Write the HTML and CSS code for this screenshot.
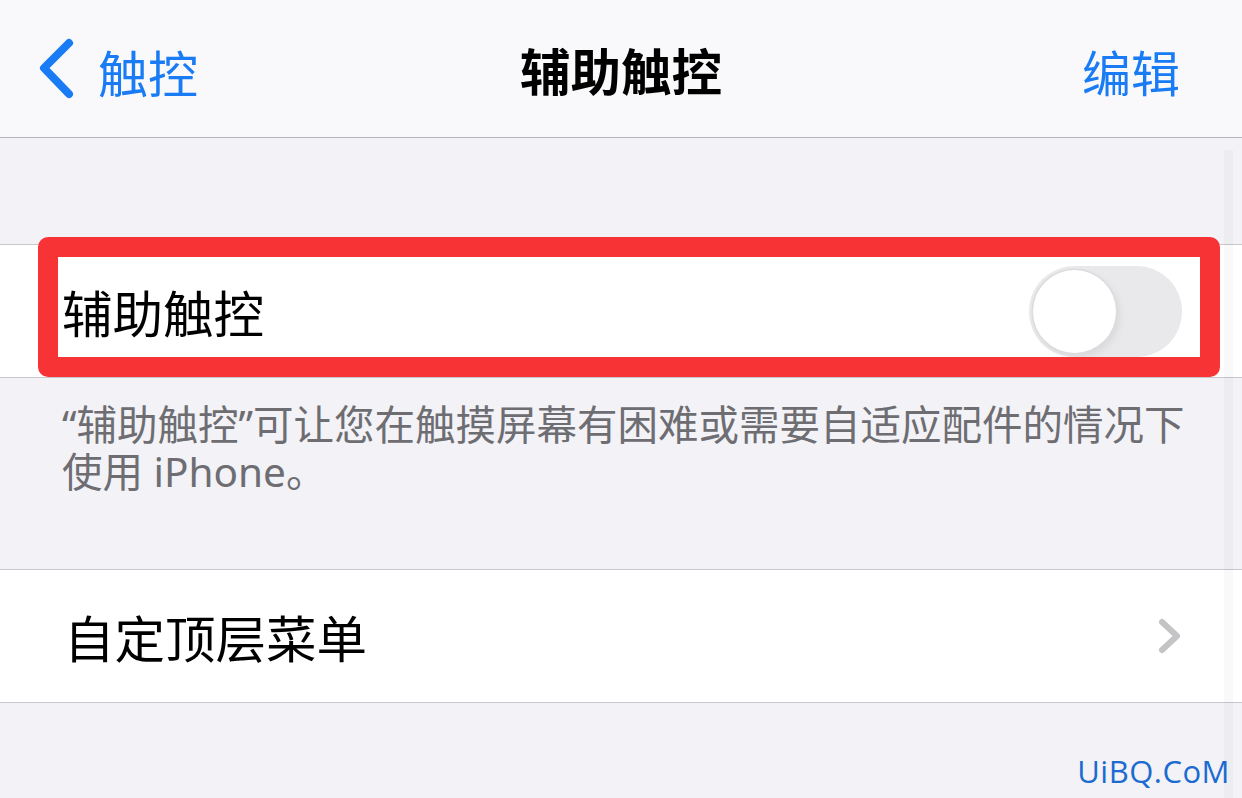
FILE: index.html
```html
<!DOCTYPE html>
<html lang="zh-CN">
<head>
  <meta charset="UTF-8">
  <meta name="viewport" content="width=device-width, initial-scale=1.0">
  <link rel="stylesheet" href="styles.css">
  <title>辅助触控</title>
</head>
<body>
  <div class="screen">
    <nav class="navbar">
      <a class="nav-back">
        <svg class="back-icon" width="40" height="62" viewBox="0 0 40 62">
          <path d="M31 5 L6 30 L31 56" fill="none" stroke="#1a7cf5" stroke-width="8" stroke-linecap="round" stroke-linejoin="round"/>
        </svg>
        <span>触控</span>
      </a>
      <div class="nav-title">辅助触控</div>
      <a class="nav-edit">编辑</a>
    </nav>

    <div class="content">
      <div class="spacer-top"></div>

      <div class="group">
        <div class="row row-toggle">
          <span class="row-label">辅助触控</span>
          <div class="switch"><div class="knob"></div></div>
          <div class="highlight"></div>
        </div>
      </div>

      <p class="footnote">“辅助触控”可让您在触摸屏幕有困难或需要自适应配件的情况下使用 iPhone。</p>

      <div class="group">
        <div class="row row-link">
          <span class="row-label label-menu">自定顶层菜单</span>
          <svg class="chevron" width="30" height="40" viewBox="0 0 30 40">
            <path d="M7 6 L22 20 L7 34" fill="none" stroke="#c4c4c7" stroke-width="6" stroke-linecap="round" stroke-linejoin="round"/>
          </svg>
        </div>
      </div>

      <div class="scroll-track"></div>
      <div class="watermark">UiBQ.CoM</div>
    </div>
  </div>
</body>
</html>
```

FILE: styles.css
```css
body {
  margin: 0;
  background-color: #f2f2f7;
  font-family: "Noto Sans CJK SC", "Noto Sans", sans-serif;
}

.screen {
  width: 1242px;
  height: 798px;
  overflow: hidden;
  position: relative;
}

.navbar {
  height: 137px;
  border-bottom: 1px solid #b6b6ba;
  background-color: #f9f9fb;
  display: flex;
  align-items: center;
  justify-content: space-between;
  padding: 0 62px 0 38px;
  position: relative;
}

.nav-back {
  display: flex;
  align-items: center;
  gap: 20px;
  color: #1a7cf5;
  font-size: 50px;
  line-height: 1;
  margin-top: 4px;
}

.back-icon {
  display: block;
  margin-top: -4px;
}

.nav-title {
  position: absolute;
  left: 0;
  right: 0;
  text-align: center;
  font-size: 50.5px;
  font-weight: bold;
  line-height: 1;
  color: #000;
  pointer-events: none;
  margin-top: 2px;
}

.nav-edit {
  color: #1a7cf5;
  font-size: 49px;
  line-height: 1;
  margin-top: 4px;
}

.content {
  position: relative;
  height: 660px;
}

.spacer-top {
  height: 106px;
}

.group {
  background-color: #fff;
  border-top: 1px solid #c8c7cc;
  border-bottom: 1px solid #c8c7cc;
}

.row {
  height: 132px;
  display: flex;
  align-items: center;
  justify-content: space-between;
  padding: 0 60px 0 62px;
  position: relative;
}

.row-label {
  font-size: 50.5px;
  line-height: 1;
  color: #000;
}

.label-menu {
  margin-left: 2px;
}

.switch {
  width: 153px;
  height: 91px;
  border-radius: 46px;
  background-color: #e9e9eb;
  position: relative;
}

.knob {
  position: absolute;
  left: 4px;
  top: 4px;
  width: 83px;
  height: 83px;
  border-radius: 50%;
  background-color: #fff;
  box-shadow: 0 0 0 1.5px #dcdcde, 3px 4px 8px rgba(0, 0, 0, 0.08);
}

.highlight {
  position: absolute;
  left: 38px;
  right: 22px;
  top: -8px;
  bottom: 0;
  border: 20px solid #f73336;
  border-radius: 10px;
}

.footnote {
  margin: 0;
  padding: 23px 56px 0 62px;
  height: 191px;
  box-sizing: border-box;
  font-family: "Noto Sans", "Noto Sans CJK SC", sans-serif;
  font-size: 40.5px;
  line-height: 47px;
  color: #6d6d72;
}

.row-link {
  height: 132px;
  padding-right: 60px;
}

.chevron {
  display: block;
  margin-right: -3px;
}

.scroll-track {
  position: absolute;
  right: 9px;
  top: 12px;
  bottom: 0;
  width: 9px;
  background-color: rgba(0, 0, 20, 0.025);
}

.watermark {
  position: absolute;
  right: 12px;
  bottom: 6px;
  font-family: "Open Sans", sans-serif;
  font-size: 31px;
  color: #1b6bd0;
  letter-spacing: 0.5px;
}
```
